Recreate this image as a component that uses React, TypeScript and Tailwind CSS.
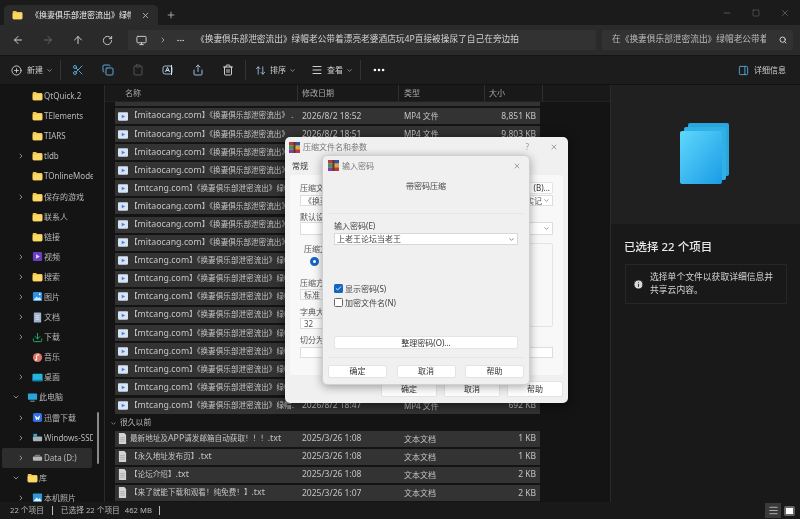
import React from "react";
import { ArrowLeft, ArrowRight, ArrowUp, RotateCw, Monitor, ChevronRight, ChevronDown, Ellipsis, Search, Minus, Square, X, Plus, CirclePlus, Scissors, Copy, Clipboard, Share, Trash2, ArrowUpDown, Menu, PanelRight, Check, Info, Download } from "lucide-react";

const Folder = ({ className = "" }: { className?: string }) => (
  <svg viewBox="0 0 16 14" className={"w-[11px] h-[10px] shrink-0 " + className}>
    <path d="M1 2.2C1 1.5 1.5 1 2.2 1h3.6l1.6 1.6h6.4c.7 0 1.2.5 1.2 1.2v8c0 .7-.5 1.2-1.2 1.2H2.2C1.5 13 1 12.500 1 11.800z" fill="#f3c649" />
    <path d="M1 4.500h14v7.300c0 .7-.5 1.200-1.200 1.200H2.200C1.500 13 1 12.500 1 11.800z" fill="#fbd968" />
  </svg>
);

const Glyph = ({ kind }: { kind: string }) => {
  const c = "w-[11px] h-[11px] shrink-0";
  switch (kind) {
    case "video":
      return <svg viewBox="0 0 12 12" className={c}><rect x="1" y="1" width="10" height="10" rx="1.500" fill="#6b3fc4" /><path d="M4.500 3.500 8.500 6l-4 2.500z" fill="#e5d7ff" /></svg>;
    case "pic":
      return <svg viewBox="0 0 12 12" className={c}><rect x="1" y="1" width="10" height="10" rx="1.500" fill="#2f8fe0" /><path d="M1.500 10 5 6l2 2 1.500-1.500 2 3.500z" fill="#cfeaff" /><circle cx="8.500" cy="3.500" r="1" fill="#fff" /></svg>;
    case "doc":
      return <svg viewBox="0 0 12 12" className={c}><rect x="2" y="0.500" width="8" height="11" rx="1" fill="#9fb3cc" /><path d="M4 4h4M4 6h4M4 8h4" stroke="#e6edf5" strokeWidth=".8" /></svg>;
    case "down":
      return <Download className={c + " text-[#22b573]"} strokeWidth={2} />;
    case "music":
      return <svg viewBox="0 0 12 12" className={c}><circle cx="6" cy="6" r="5" fill="#d9776a" /><path d="M5 8.500V3.500l3-.5" stroke="#fff" strokeWidth="1" fill="none" /><circle cx="4.300" cy="8.500" r="1" fill="#fff" /></svg>;
    case "desk":
      return <svg viewBox="0 0 12 12" className={c}><rect x="0.500" y="2" width="11" height="8" rx="1" fill="#25b6e0" /><rect x="0.500" y="8.500" width="11" height="1.500" fill="#0d7fae" /></svg>;
    case "pc":
      return <svg viewBox="0 0 12 12" className={c}><rect x="1" y="1.500" width="10" height="7" rx="1" fill="#2aa3d8" /><rect x="3.500" y="9.500" width="5" height="1" fill="#8fa5b3" /></svg>;
    case "xl":
      return <svg viewBox="0 0 12 12" className={c}><rect x="1" y="1" width="10" height="10" rx="2" fill="#2e6fe6" /><path d="M3 3.500 6 6l3-2.500L7.500 9 6 7.500 4.500 9z" fill="#fff" /></svg>;
    case "win":
      return <svg viewBox="0 0 12 12" className={c}><rect x="1" y="5" width="10" height="5" rx="1" fill="#a9b0b5" /><rect x="1.500" y="2" width="4" height="3" fill="#32a7e0" /></svg>;
    case "disk":
      return <svg viewBox="0 0 12 12" className={c}><rect x="1" y="5" width="10" height="4.500" rx="1" fill="#b5b5b5" /><path d="M2.500 5 3.500 3h5l1 2z" fill="#7c7c7c" /></svg>;
    case "photo":
      return <svg viewBox="0 0 12 12" className={c}><rect x="1" y="1.500" width="10" height="9" rx="1" fill="#2f9ad8" /><path d="M1.500 10 5 6l2 2 1.500-1.500 2 3.500z" fill="#e4f4ff" /></svg>;
    default:
      return <Folder />;
  }
};

const nav: [string, string, number, string?, boolean?][] = [
  ["QtQuick.2", "folder", 0],
  ["TElements", "folder", 0],
  ["TIARS", "folder", 0],
  ["tldb", "folder", 0, ">"],
  ["TOnlineMode", "folder", 0],
  ["保存的游戏", "folder", 0, ">"],
  ["联系人", "folder", 0],
  ["链接", "folder", 0],
  ["视频", "video", 0, ">"],
  ["搜索", "folder", 0, ">"],
  ["图片", "pic", 0, ">"],
  ["文档", "doc", 0, ">"],
  ["下载", "down", 0, ">"],
  ["音乐", "music", 0],
  ["桌面", "desk", 0, ">"],
  ["此电脑", "pc", 1, "v"],
  ["迅雷下载", "xl", 0, ">"],
  ["Windows-SSD", "win", 0, ">"],
  ["Data (D:)", "disk", 0, ">", true],
  ["库", "folder", 1, "v"],
  ["本机照片", "photo", 0, ">"],
];

const MI = "【mitaocang.com】《换妻俱乐部泄密流出》";
const MT = "【mtcang.com】《换妻俱乐部泄密流出》";
const tail = "绿帽老公带着漂亮老婆酒店玩4P";
const videos: [string, string, string][] = [
  [MI + " ...", "2026/8/2 18:52", "8,851 KB"],
  [MI, "2026/8/2 18:51", "9,803 KB"],
  [MI + tail, "2026/8/2 18:50", "7,120 KB"],
  [MI + tail, "2026/8/2 18:50", "6,482 KB"],
  [MT + tail, "2026/8/2 18:50", "5,230 KB"],
  [MI + tail, "2026/8/2 18:49", "8,104 KB"],
  [MI + tail, "2026/8/2 18:49", "4,377 KB"],
  [MI + tail, "2026/8/2 18:49", "6,018 KB"],
  [MT + tail, "2026/8/2 18:49", "3,902 KB"],
  [MT + tail, "2026/8/2 18:48", "7,245 KB"],
  [MT + tail, "2026/8/2 18:48", "5,611 KB"],
  [MT + tail, "2026/8/2 18:48", "2,840 KB"],
  [MT + tail, "2026/8/2 18:48", "4,096 KB"],
  [MT + tail, "2026/8/2 18:48", "3,317 KB"],
  [MT + tail, "2026/8/2 18:48", "1,925 KB"],
  [MT + tail, "2026/8/2 18:47", "1,204 KB"],
  [MT + "绿帽...", "2026/8/2 18:47", "692 KB"],
];
const texts: [string, string, string][] = [
  ["最新地址及APP请发邮箱自动获取！！！.txt", "2025/3/26 1:08", "1 KB"],
  ["【永久地址发布页】.txt", "2025/3/26 1:08", "1 KB"],
  ["【论坛介绍】.txt", "2025/3/26 1:08", "2 KB"],
  ["【来了就能下载和观看！纯免费！】.txt", "2025/3/26 1:07", "2 KB"],
];

const Mixed = ({ text }: { text: string }) => (
  <>
    {text.split(/([A-Za-z0-9.]+)/).map((p, i) =>
      i % 2 === 1 ? <span key={i} className="text-[8.8px]">{p}</span> : <span key={i}>{p}</span>
    )}
  </>
);

const Row = ({ name, date, type, size, txt }: { name: string; date: string; type: string; size: string; txt?: boolean }) => (
  <div className="w-[425px] h-4 mb-[2.100px] shrink-0 flex items-center bg-[#333333] text-[#c4c4c4] text-[8.500px] whitespace-nowrap">
    <div className="w-[187px] shrink-0 flex items-center pl-[3px] pr-[8px] overflow-hidden">
      {txt ? (
        <svg viewBox="0 0 10 12" className="w-[9px] h-[11px] shrink-0 mr-[3px]"><path d="M1 0h6l2 2v10H1z" fill="#d4d4d4" /><path d="M2.500 5h5M2.500 7h5M2.500 9h5" stroke="#9a9a9a" strokeWidth=".7" /></svg>
      ) : (
        <svg viewBox="0 0 12 10" className="w-[10px] h-[9px] shrink-0 mr-[2px]"><rect width="12" height="10" rx="1" fill="#d9e3f2" /><path d="M4.500 2.800 8.500 5l-4 2.200z" fill="#3f7fe0" /></svg>
      )}
      <span className="overflow-hidden text-[7.600px]"><Mixed text={name} /></span>
    </div>
    <span className="w-[102px] shrink-0">{date}</span>
    <span className="w-[80px] shrink-0 text-[8px]">{type}</span>
    <span className="w-[52px] shrink-0 text-right">{size}</span>
  </div>
);

const DBtn = ({ children, className = "" }: { children: React.ReactNode; className?: string }) => (
  <div className={"flex items-center justify-center bg-white border border-[#e4e4e4] rounded-[2px] text-[8px] text-[#333] " + className}>{children}</div>
);

const WinRar = () => (
  <svg viewBox="0 0 12 12" className="w-[11px] h-[11px] shrink-0">
    <rect width="6" height="4" fill="#b23a4a" /><rect x="6" width="6" height="4" fill="#3a4fa8" />
    <rect y="4" width="6" height="4" fill="#3f9a4a" /><rect x="6" y="4" width="6" height="4" fill="#e0a62f" />
    <rect y="8" width="6" height="4" fill="#8a3aa8" /><rect x="6" y="8" width="6" height="4" fill="#b23a4a" />
    <rect x="5" y="0" width="2" height="12" fill="#5a3a1a" />
  </svg>
);

const ToolIcon = ({ children, dim }: { children: React.ReactNode; dim?: boolean }) => (
  <div className={"w-[30px] flex justify-center shrink-0 " + (dim ? "opacity-30" : "")}>{children}</div>
);

export default function App() {
  return (
    <div className="relative w-[800px] h-[519px] overflow-hidden bg-[#191919] text-[#cfcfcf] flex flex-col blur-[0.35px] font-['Noto_Sans','Noto_Sans_CJK_SC',sans-serif]">
      {/* title bar */}
      <div className="h-[25px] shrink-0 bg-[#1b1b1b] flex items-end pl-[4px]">
        <div className="w-[154px] h-[20px] bg-[#2b2b2b] rounded-t-[5px] flex items-center pl-2 pr-2 text-[8px] font-medium text-[#d4d4d4]">
          <Folder />
          <span className="ml-[8px] w-[100px] overflow-hidden whitespace-nowrap">《换妻俱乐部泄密流出》绿帽老</span>
          <X className="w-[9px] h-[9px] ml-auto text-[#cfcfcf]" />
        </div>
        <Plus className="w-[10px] h-[10px] ml-[8px] mb-[5px] text-[#bbbbbb]" />
        <div className="ml-auto flex items-center gap-[20px] pr-[10px] self-center text-[#8e8e8e]">
          <Minus className="w-[10px] h-[10px]" strokeWidth={1.200} />
          <Square className="w-[8px] h-[8px]" strokeWidth={1.200} />
          <X className="w-[10px] h-[10px]" strokeWidth={1.200} />
        </div>
      </div>
      {/* address bar */}
      <div className="h-[31px] shrink-0 bg-[#2a2a2a] flex items-center border-b border-[#151515]">
        <div className="w-[128px] shrink-0 flex items-center pl-[12px] gap-[18px]">
          <ArrowLeft className="w-3 h-3 text-[#cfcfcf]" />
          <ArrowRight className="w-3 h-3 text-[#666]" />
          <ArrowUp className="w-3 h-3 text-[#cfcfcf]" />
          <RotateCw className="w-[11px] h-[11px] text-[#cfcfcf]" />
        </div>
        <div className="w-[468px] h-5 shrink-0 bg-[#323232] flex items-center pl-[8px] text-[8.700px] text-[#d4d4d4] whitespace-nowrap overflow-hidden rounded-[2px]">
          <Monitor className="w-[11px] h-[11px]" />
          <ChevronRight className="w-[8px] h-[8px] ml-[12px]" />
          <Ellipsis className="w-[9px] h-[9px] ml-[9px]" />
          <span className="ml-[11px]">《换妻俱乐部泄密流出》绿帽老公带着漂亮老婆酒店玩4P直接被操尿了自己在旁边拍</span>
        </div>
        <div className="w-[191px] h-5 ml-[6px] bg-[#323232] flex items-center pl-[10px] pr-[6px] text-[8.700px] text-[#bbbbbb] whitespace-nowrap rounded-[2px]">
          <span className="w-[154px] overflow-hidden">在《换妻俱乐部泄密流出》绿帽老公带着</span>
          <Search className="w-[8px] h-[8px] ml-auto text-[#cfcfcf]" strokeWidth={3} />
        </div>
      </div>
      {/* toolbar */}
      <div className="h-[29px] shrink-0 bg-[#1c1c1c] flex items-center border-b border-[#111] text-[8px] text-[#cfcfcf]">
        <div className="w-[61px] shrink-0 flex items-center pl-[11px] border-r border-[#333] h-[20px]">
          <CirclePlus className="w-[11px] h-[11px] text-[#cfcfcf]" />
          <span className="ml-[5px]">新建</span>
          <ChevronDown className="w-[7px] h-[7px] ml-[3px]" />
        </div>
        <div className="w-[185px] shrink-0 flex items-center border-r border-[#333] h-[20px] pl-[2px]">
          <ToolIcon><Scissors className="w-[12px] h-[12px] text-[#58a6d6]" /></ToolIcon>
          <ToolIcon><Copy className="w-[12px] h-[12px] text-[#58a6d6]" /></ToolIcon>
          <ToolIcon dim><Clipboard className="w-[12px] h-[12px]" /></ToolIcon>
          <ToolIcon>
            <svg viewBox="0 0 12 12" className="w-[12px] h-[12px]" fill="none" stroke="#9ab7d6" strokeWidth="1">
              <rect x="1" y="2" width="9" height="8" rx="2" />
              <path d="M3.500 8 5.500 3.500 7.500 8M4.300 6.500h2.400M9.500 1v10" stroke="#d5e3f2" />
            </svg>
          </ToolIcon>
          <ToolIcon><Share className="w-[12px] h-[12px] text-[#9ab7d6]" /></ToolIcon>
          <ToolIcon><Trash2 className="w-[12px] h-[12px] text-[#cfcfcf]" /></ToolIcon>
        </div>
        <div className="w-[56px] shrink-0 flex items-center pl-[9px]">
          <ArrowUpDown className="w-[11px] h-[11px] text-[#9ab7d6]" />
          <span className="ml-[4px]">排序</span>
          <ChevronDown className="w-[7px] h-[7px] ml-[3px]" />
        </div>
        <div className="w-[59px] shrink-0 flex items-center pl-[9px] border-r border-[#333] h-[20px]">
          <Menu className="w-[12px] h-[12px]" />
          <span className="ml-[4px]">查看</span>
          <ChevronDown className="w-[7px] h-[7px] ml-[3px]" />
        </div>
        <Ellipsis className="w-[14px] h-[14px] ml-[11px] text-white" strokeWidth={2.500} />
        <div className="ml-auto flex items-center pr-[14px]">
          <PanelRight className="w-[11px] h-[11px] text-[#58a6d6]" />
          <span className="ml-[5px]">详细信息</span>
        </div>
      </div>
      {/* main */}
      <div className="flex-1 min-h-0 flex bg-[#141414]">
        <div className="relative w-[105px] shrink-0 border-r border-[#2a2a2a] overflow-hidden pt-[1px]">
          {nav.map(([label, kind, outdent, arrow, sel]) => (
            <div key={label} className={"h-[20.100px] flex items-center text-[8px] text-[#b9b9b9] whitespace-nowrap overflow-hidden " + (sel ? "bg-[#2d2d2d] rounded-[2px] ml-[2px] w-[90px]" : "w-[93px]")}>
              <span className={(sel ? "w-[30px]" : outdent ? "w-[27px]" : "w-[32px]") + " shrink-0 flex justify-end pr-[7px]"}>
                {arrow === ">" && <ChevronRight className="w-[8px] h-[8px] text-[#c4c4c4]" />}
                {arrow === "v" && <ChevronDown className="w-[8px] h-[8px] text-[#c4c4c4]" />}
              </span>
              <Glyph kind={kind} />
              <span className="ml-[1px]">{label}</span>
            </div>
          ))}
          <div className="absolute left-[97px] top-[327px] w-[2px] h-[52px] bg-[#8a8a8a] rounded-full" />
        </div>
        <div className="w-[505px] shrink-0 relative flex flex-col overflow-hidden">
          <div className="h-[17px] shrink-0 flex items-center bg-[#191919] border-b border-[#222] text-[8px] text-[#a8a8a8] z-10">
            <span className="w-[193px] pl-[20px] border-r border-[#303030] h-full flex items-center">名称</span>
            <span className="w-[101px] pl-[4px] border-r border-[#303030] h-full flex items-center">修改日期</span>
            <span className="w-[86px] pl-[5px] border-r border-[#303030] h-full flex items-center">类型</span>
            <span className="w-[58px] pl-[4px] border-r border-[#303030] h-full flex items-center">大小</span>
          </div>
          <div className="flex-1 min-h-0 flex flex-col overflow-hidden pl-[10px] -mt-[5px]">
            <div className="h-[9px] shrink-0 mb-[2px] bg-[#333333] w-[425px]" />
            {videos.map((v, i) => (
              <Row key={i} name={v[0]} date={v[1]} type="MP4 文件" size={v[2]} />
            ))}
            <div className="h-[15px] shrink-0 flex items-center text-[7.800px] text-[#b9b9b9] -ml-[5px]">
              <ChevronDown className="w-[7px] h-[7px] mr-[3px]" />很久以前
            </div>
            {texts.map((v, i) => (
              <Row key={i} txt name={v[0]} date={v[1]} type="文本文档" size={v[2]} />
            ))}
          </div>
        </div>
        <div className="flex-1 flex flex-col border-l border-[#2a2a2a]">
          <div className="h-[139px] shrink-0 bg-[#202020] flex justify-center items-center pb-[2px]">
            <svg viewBox="0 0 50 62" className="w-[50px] h-[62px] mr-[2px]">
              <defs>
                <linearGradient id="st" x1="0" y1="0" x2="1" y2="1"><stop offset="0" stopColor="#5fd8fb" /><stop offset="1" stopColor="#1a9be6" /></linearGradient>
              </defs>
              <rect x="8" y="0" width="41" height="53" rx="2" fill="#2aa5de" />
              <rect x="4" y="4" width="42" height="53" rx="2" fill="#2fb1e6" />
              <rect x="0" y="8" width="42" height="53" rx="2" fill="url(#st)" />
            </svg>
          </div>
          <div className="flex-1 bg-[#191919] pl-[13px] pr-[13px] pt-[16px]">
            <div className="text-[11.500px] leading-[14px] text-[#e8e8e8] font-medium whitespace-nowrap">已选择 22 个项目</div>
            <div className="mt-[10px] h-[40px] border border-[#262626] flex items-center pl-[7px] pr-[8px] ml-[1px]">
              <Info className="w-[11px] h-[11px] shrink-0 text-[#191919] fill-[#d8d8d8]" strokeWidth={2} />
              <span className="ml-[6px] text-[8.800px] leading-[13px] text-[#d4d4d4]">选择单个文件以获取详细信息并共享云内容。</span>
            </div>
          </div>
        </div>
      </div>
      {/* status */}
      <div className="h-[17px] shrink-0 bg-[#191919] flex items-center pl-[10px] text-[7.700px] text-[#b9b9b9] whitespace-nowrap">
        <span>22 个项目</span>
        <span className="mx-[8px] w-px h-[9px] bg-[#bbb]" />
        <span>已选择 22 个项目</span>
        <span className="ml-[5px]">462 MB</span>
        <span className="ml-[7px] w-px h-[9px] bg-[#bbb]" />
        <div className="ml-auto flex items-center pr-[5px] gap-[3px]">
          <div className="w-[16px] h-[15px] bg-[#3a3a3a] flex items-center justify-center"><Menu className="w-[11px] h-[11px] text-[#bbb]" /></div>
          <div className="w-[11px] h-[10px] bg-white border-2 border-[#666] rounded-[2px]" />
        </div>
      </div>

      {/* outer dialog */}
      <div className="absolute left-[285px] top-[137px] w-[283px] h-[266px] bg-[#f0f0f0] rounded-[5px] shadow-[0_2px_12px_rgba(0,0,0,0.6)] text-[8px] text-[#555] flex flex-col">
        <div className="h-[18px] mt-[1px] shrink-0 flex items-center pl-[4px] pr-[10px]">
          <WinRar />
          <span className="ml-[3px] text-[#777]">压缩文件名和参数</span>
          <span className="ml-auto mr-[21px] text-[#999]">?</span>
          <X className="w-[8px] h-[8px] text-[#777]" />
        </div>
        <div className="h-[19px] shrink-0 flex items-center pl-[7px] text-[#333]">常规</div>
        <div className="mx-[5px] h-[200px] shrink-0 bg-[#f8f8f8] rounded-[3px] pl-[10px] pr-[10px] pt-[5px] flex flex-col">
          <div className="flex justify-between h-[15px] items-center">
            <span>压缩文件名</span>
            <DBtn className="w-[60px] h-[12px] justify-end pr-[2px]">(B)...</DBtn>
          </div>
          <div className="h-[11px] bg-white border border-[#ddd] flex items-center pl-[3px] pr-[2px] overflow-hidden">
            <span>《换妻俱乐部</span>
            <span className="ml-auto">实记</span>
            <ChevronDown className="w-[7px] h-[7px] ml-[1px]" />
          </div>
          <div className="h-[11px] mt-[5px] flex items-center">默认设置</div>
          <div className="h-[13px] bg-white border border-[#ddd] flex items-center justify-end pr-[2px]"><ChevronDown className="w-[7px] h-[7px]" /></div>
          <div className="flex mt-[8px]">
            <div className="w-[100px] shrink-0">
              <div className="ml-[4px] h-[32px] pt-[1px]">
                <div className="leading-[10px]">压缩文件格式</div>
                <div className="mt-[3px] ml-[6px] w-[9px] h-[9px] rounded-full border-[3px] border-[#1565c0] bg-white" />
              </div>
              <div className="h-[12px] mt-[2px] flex items-center">压缩方式</div>
              <div className="h-[11px] bg-[#f9f9f9] border border-[#ddd] flex items-center pl-[3px]">标准</div>
              <div className="h-[12px] mt-[6px] flex items-center">字典大小</div>
              <div className="h-[11px] bg-white border border-[#ddd] flex items-center pl-[3px]">32</div>
            </div>
            <div className="flex-1 h-[84px] ml-[4px] border border-[#e4e4e4] rounded-[2px]" />
          </div>
          <div className="h-[12px] mt-[5px] flex items-center">切分为分卷</div>
          <div className="h-[11px] bg-white border border-[#ddd] mt-[1px]" />
        </div>
        <div className="flex-1 flex items-center justify-end gap-[7px] pr-[5px] text-[8px] pb-[1px]">
          <DBtn className="w-[56px] h-[16px]">确定</DBtn>
          <DBtn className="w-[56px] h-[16px]">取消</DBtn>
          <DBtn className="w-[56px] h-[16px]">帮助</DBtn>
        </div>
      </div>

      {/* inner dialog */}
      <div className="absolute left-[322px] top-[155px] w-[208px] h-[230px] bg-[#f0f0f0] rounded-[5px] border border-[#d0d0d0] shadow-[0_2px_10px_rgba(0,0,0,0.35)] text-[8px] text-[#444] flex flex-col">
        <div className="h-[17px] mt-[1px] shrink-0 flex items-center pl-[5px] pr-[8px]">
          <WinRar />
          <span className="ml-[3px] text-[#777]">输入密码</span>
          <X className="w-[8px] h-[8px] ml-auto text-[#777]" />
        </div>
        <div className="text-center mt-[6px] leading-[12px]">带密码压缩</div>
        <div className="mx-[5px] mt-[21px] border-t border-[#e6e6e6]" />
        <div className="pl-[11px] pr-[11px] mt-[6px] flex flex-col flex-1">
          <div className="leading-[12px]">输入密码(E)</div>
          <div className="h-[12px] mt-[1px] bg-white border border-[#d8d8d8] flex items-center pl-[2px] pr-[2px]">
            上老王论坛当老王
            <ChevronDown className="w-[7px] h-[7px] ml-auto" />
          </div>
          <div className="flex items-center mt-[39px] h-[9px]">
            <div className="w-[9px] h-[9px] rounded-[1.500px] bg-[#1565c0] flex items-center justify-center"><Check className="w-[7px] h-[7px] text-white" strokeWidth={3} /></div>
            <span className="ml-[2px]">显示密码(S)</span>
          </div>
          <div className="flex items-center mt-[5px] h-[9px]">
            <div className="w-[9px] h-[9px] rounded-[1.500px] bg-white border border-[#666]" />
            <span className="ml-[2px]">加密文件名(N)</span>
          </div>
          <DBtn className="mt-[29px] h-[13px] w-[184px]">整理密码(O)...</DBtn>
        </div>
        <div className="mx-[5px] border-t border-[#e6e6e6]" />
        <div className="h-[26px] shrink-0 flex items-center justify-between px-[5px]">
          <DBtn className="w-[59px] h-[13px]">确定</DBtn>
          <DBtn className="w-[59px] h-[13px]">取消</DBtn>
          <DBtn className="w-[59px] h-[13px]">帮助</DBtn>
        </div>
      </div>
    </div>
  );
}
